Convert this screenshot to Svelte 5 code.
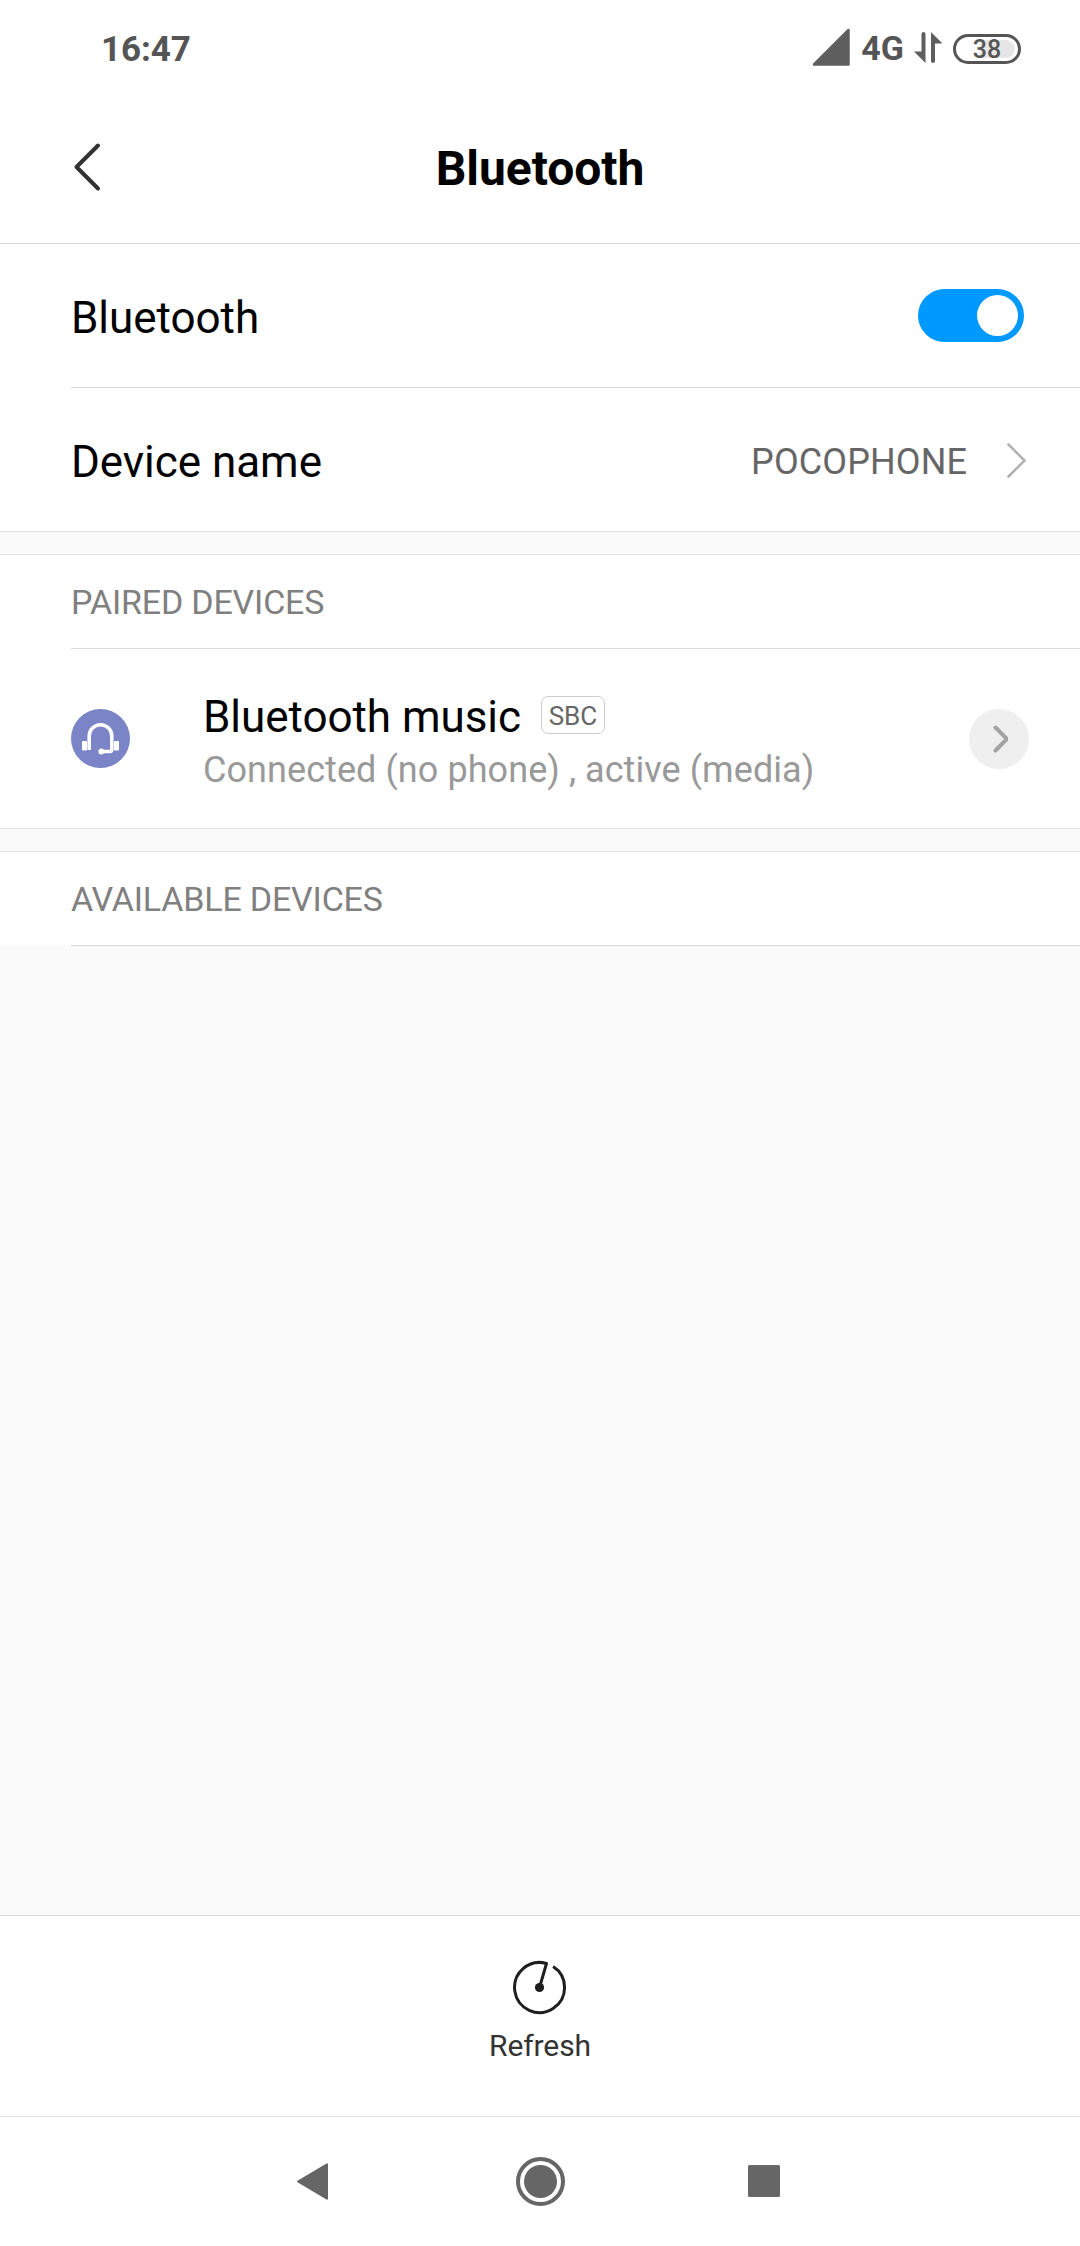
<script>
  let enabled = true;
  let deviceName = "POCOPHONE";
  let battery = 38;

  let paired = [
    {
      id: 1,
      name: "Bluetooth music",
      codec: "SBC",
      status: "Connected (no phone) , active (media)",
    },
  ];

  const toggle = () => {
    enabled = !enabled;
  };
</script>

<style>
  :global(body) {
    background: #fafafa;
  }

  .screen {
    display: flex;
    flex-direction: column;
    width: 1080px;
    height: 2246px;
    font-family: Roboto, sans-serif;
    color: #000;
    background: #fafafa;
  }

  button {
    display: flex;
    padding: 0;
    border: none;
    background: none;
    font: inherit;
    color: inherit;
  }

  svg {
    display: block;
    flex: none;
  }

  .status-bar {
    display: flex;
    align-items: center;
    box-sizing: border-box;
    height: 90px;
    padding: 7px 59px 0 101px;
    background: #fff;
    font-size: 34px;
    font-weight: 700;
    color: #555;
  }

  .time {
    flex: 1;
    padding-top: 2px;
    font-size: 35px;
    letter-spacing: -0.1px;
  }

  .signal {
    margin-right: 11px;
    margin-top: -3px;
  }

  .network {
    margin-right: 10px;
    margin-top: -1px;
  }

  .arrows {
    margin-right: 10px;
    margin-top: -2px;
  }

  .battery {
    display: flex;
    align-items: center;
    justify-content: center;
    box-sizing: border-box;
    width: 68px;
    height: 30px;
    border: 3px solid #555;
    border-radius: 15px;
    font-size: 25px;
    font-weight: 500;
  }

  .battery-fill {
    width: 56px;
    height: 18px;
    border-radius: 9px;
    line-height: 19px;
    text-align: center;
  }

  .title-bar {
    display: grid;
    grid-template-columns: 180px 1fr 180px;
    align-items: center;
    box-sizing: border-box;
    height: 154px;
    border-bottom: 1px solid #d9d9d9;
    background: #fff;
  }

  .back {
    padding: 1px 0 0 73px;
  }

  h1 {
    margin: 3px 0 0;
    font-size: 48px;
    font-weight: 700;
    letter-spacing: -0.05px;
    text-align: center;
  }

  .group {
    padding-left: 71px;
    background: #fff;
    border-bottom: 1px solid #e2e2e2;
  }

  .group + .group {
    margin-top: 22px;
    border-top: 1px solid #e2e2e2;
  }

  .group.last {
    border-bottom: none;
  }

  .row {
    display: flex;
    align-items: center;
    height: 143px;
    font-size: 44px;
  }

  .row + .row {
    border-top: 1px solid #d9d9d9;
  }

  .label {
    flex: 1;
    padding-top: 5px;
    letter-spacing: -0.04px;
  }

  .value {
    padding-top: 5px;
    margin-right: 39px;
    font-size: 36px;
    letter-spacing: 0.1px;
    color: #666;
  }

  .chevron {
    margin-right: 54px;
  }

  .toggle {
    box-sizing: border-box;
    width: 106px;
    height: 53px;
    padding: 6px;
    margin-right: 56px;
    border-radius: 27px;
    background: #ccc;
  }

  .toggle.on {
    justify-content: flex-end;
    background: #0099ff;
  }

  .knob {
    width: 41px;
    height: 41px;
    border-radius: 50%;
    background: #fff;
  }

  h2 {
    height: 92px;
    margin: 0;
    padding-top: 1px;
    border-bottom: 1px solid #d9d9d9;
    font-size: 34px;
    font-weight: 400;
    letter-spacing: -0.18px;
    line-height: 92px;
    color: #808080;
  }

  .device {
    display: flex;
    align-items: center;
    height: 179px;
  }

  .info {
    flex: 1;
    margin-left: 73px;
    padding-top: 7px;
  }

  .name {
    display: flex;
    align-items: center;
    height: 53px;
    font-size: 44px;
    letter-spacing: -0.05px;
  }

  .codec {
    box-sizing: border-box;
    width: 64px;
    height: 38px;
    margin: -5px 0 0 20px;
    border: 1px solid #ccc;
    border-radius: 7px;
    font-size: 26px;
    line-height: 38px;
    text-align: center;
    color: #666;
  }

  .state {
    height: 50px;
    font-size: 36px;
    letter-spacing: 0.07px;
    line-height: 53px;
    color: #999;
  }

  .details {
    align-items: center;
    justify-content: center;
    width: 60px;
    height: 60px;
    margin-right: 51px;
    border-radius: 50%;
    background: #efefef;
  }

  .refresh {
    flex-direction: column;
    align-items: center;
    box-sizing: border-box;
    width: 100%;
    height: 201px;
    margin-top: auto;
    padding-top: 43px;
    border-top: 1px solid #d9d9d9;
    background: #fff;
    font-size: 30px;
    letter-spacing: -0.1px;
    color: #333;
  }

  .refresh span {
    margin-top: 13px;
  }

  .nav {
    display: flex;
    align-items: center;
    justify-content: center;
    box-sizing: border-box;
    height: 130px;
    border-top: 1px solid #e2e2e2;
    background: #fff;
  }
</style>

<div class="screen">
  <div class="status-bar">
    <span class="time">16:47</span>
    <svg class="signal" width="38" height="38" viewBox="0 0 38 38">
      <path d="M2 36.5 36.5 2v34.5Z" fill="#5e5e5e" stroke="#5e5e5e" stroke-width="2.5" stroke-linejoin="round" />
    </svg>
    <span class="network">4G</span>
    <svg class="arrows" width="29" height="31" viewBox="0 0 29 31" fill="#5e5e5e">
      <path d="M7.5 2Q7.5 0 9.5 0T11.5 2V31L0 19.5H7.5Z" />
      <path d="M17 0 28.5 11.5H21V29Q21 31 19 31T17 29Z" />
    </svg>
    <div class="battery">
      <span class="battery-fill" style="background: linear-gradient(90deg, transparent {battery}%, #e6e6e6 {battery}%)">{battery}</span>
    </div>
  </div>

  <div class="title-bar">
    <button class="back" aria-label="Back">
      <svg width="28" height="50" viewBox="0 0 28 50" fill="none" stroke="#333" stroke-width="4" stroke-linecap="round" stroke-linejoin="round">
        <path d="M25 3.5 3.5 25 25 46.5" />
      </svg>
    </button>
    <h1>Bluetooth</h1>
  </div>

  <div class="group">
    <div class="row">
      <span class="label">Bluetooth</span>
      <button class="toggle" class:on={enabled} aria-label="Toggle Bluetooth" on:click={toggle}>
        <span class="knob"></span>
      </button>
    </div>
    <div class="row">
      <span class="label">Device name</span>
      <span class="value">{deviceName}</span>
      <svg class="chevron" width="20" height="36" viewBox="0 0 20 36" fill="none" stroke="#b2b2b2" stroke-width="2.6" stroke-linecap="round" stroke-linejoin="round">
        <path d="M2.5 2.5 18.5 18.5 2.5 34.5" />
      </svg>
    </div>
  </div>

  <div class="group">
    <h2>PAIRED DEVICES</h2>
    {#each paired as device (device.id)}
      <div class="device">
        <svg width="59" height="59" viewBox="0 0 59 59">
          <circle cx="29.5" cy="29.5" r="29.5" fill="#7b84c7" />
          <path d="M18.2 41V27a11.2 11.2 0 0 1 22.6 0V40.5q0 2-2 2H31" fill="none" stroke="#fff" stroke-width="3.6" />
          <circle cx="30.3" cy="42.5" r="2.9" fill="#fff" />
          <rect x="11" y="32" width="5" height="9.5" rx="1.2" fill="#fff" />
          <rect x="43" y="32" width="5" height="9.5" rx="1.2" fill="#fff" />
        </svg>
        <div class="info">
          <div class="name">
            {device.name}
            <span class="codec">{device.codec}</span>
          </div>
          <div class="state">{device.status}</div>
        </div>
        <button class="details" aria-label="Device details">
          <svg width="18" height="30" viewBox="0 0 18 30" fill="none" stroke="#a3a3a3" stroke-width="4" stroke-linecap="round" stroke-linejoin="round">
            <path d="M5.5 3.5 17 15 5.5 26.5" />
          </svg>
        </button>
      </div>
    {/each}
  </div>

  <div class="group last">
    <h2>AVAILABLE DEVICES</h2>
  </div>

  <button class="refresh">
    <svg width="56" height="56" viewBox="0 0 56 56" fill="none" stroke="#1e1e1e" stroke-width="3">
      <path d="M27.5 28.5 34.5 4.5A25 25 0 1 0 41.1 7.5" stroke-linejoin="round" />
      <circle cx="27.5" cy="28.5" r="4.6" fill="#1e1e1e" stroke="none" />
    </svg>
    <span>Refresh</span>
  </button>

  <div class="nav">
    <svg width="488" height="51" viewBox="0 0 488 51" fill="#666">
      <path d="M2 25.5 31 8.3V42.7Z" stroke="#666" stroke-width="2" stroke-linejoin="round" />
      <circle cx="244.5" cy="25.5" r="22.5" fill="none" stroke="#666" stroke-width="4" />
      <circle cx="244.5" cy="25.5" r="16.5" />
      <rect x="452" y="9" width="32" height="32" rx="1.5" />
    </svg>
  </div>
</div>
